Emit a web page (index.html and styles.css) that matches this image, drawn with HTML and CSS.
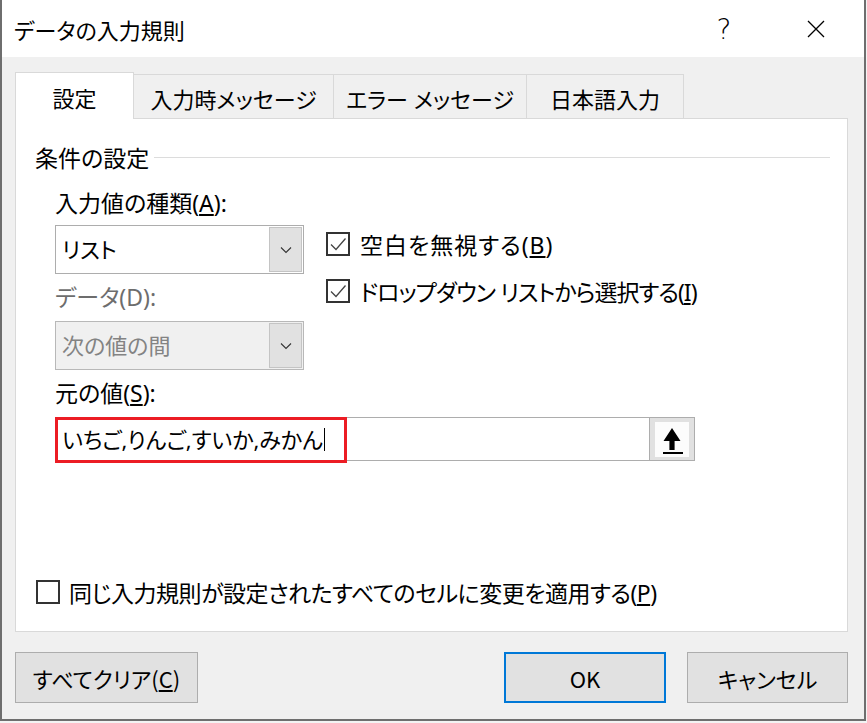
FILE: index.html
```html
<!DOCTYPE html>
<html lang="ja">
<head>
    <meta charset="UTF-8">
    <title>データの入力規則</title>
    <link rel="stylesheet" href="styles.css">
</head>
<body>
    <div class="dialog">
        <div class="titlebar">
            <span class="title">データの入力規則</span>
            <span class="title-btn help">?</span>
            <span class="title-btn close">
                <svg width="18" height="18" viewBox="0 0 18 18"><path d="M1 1 L17 17 M17 1 L1 17" stroke="#000" stroke-width="1.3" fill="none"/></svg>
            </span>
        </div>

        <div class="tabs">
            <div class="tab active">設定</div>
            <div class="tab tab-2">入力時メッセージ</div>
            <div class="tab tab-3">エラー メッセージ</div>
            <div class="tab tab-4">日本語入力</div>
        </div>

        <div class="panel">
            <div class="group-head">
                <span>条件の設定</span>
                <span class="rule"></span>
            </div>

            <div class="criteria">
                <div class="col-left">
                    <div class="label">入力値の種類(<u>A</u>):</div>
                    <div class="combo">
                        <span class="combo-text">リスト</span>
                        <span class="combo-btn">
                            <svg width="12" height="8" viewBox="0 0 12 8"><path d="M1 1.5 L6 6.5 L11 1.5" stroke="#333" stroke-width="1.1" fill="none"/></svg>
                        </span>
                    </div>
                    <div class="label label-2 disabled">データ(D):</div>
                    <div class="combo combo-2 disabled">
                        <span class="combo-text">次の値の間</span>
                        <span class="combo-btn">
                            <svg width="12" height="8" viewBox="0 0 12 8"><path d="M1 1.5 L6 6.5 L11 1.5" stroke="#333" stroke-width="1.1" fill="none"/></svg>
                        </span>
                    </div>
                </div>
                <div class="col-right">
                    <div class="check">
                        <span class="box">
                            <svg width="20" height="20" viewBox="0 0 20 20"><path d="M3 10.5 L8 15.5 L17.5 4.5" stroke="#444" stroke-width="1.3" fill="none"/></svg>
                        </span>
                        <span class="loose">空白を無視する(<u>B</u>)</span>
                    </div>
                    <div class="check check-2">
                        <span class="box">
                            <svg width="20" height="20" viewBox="0 0 20 20"><path d="M3 10.5 L8 15.5 L17.5 4.5" stroke="#444" stroke-width="1.3" fill="none"/></svg>
                        </span>
                        <span class="tight">ドロップダウン リストから選択する(<u>I</u>)</span>
                    </div>
                </div>
            </div>

            <div class="label label-3">元の値(<u>S</u>):</div>
            <div class="source">
                <span class="source-text">いちご,りんご,すいか,みかん<span class="caret"></span></span>
                <span class="ref-btn">
                    <span class="ref-inner">
                        <svg width="34" height="35" viewBox="0 0 34 35"><path d="M17 6 L25.5 19 L19.6 19 L19.6 28 L14.4 28 L14.4 19 L8.5 19 Z" fill="#000"/><rect x="8" y="30" width="20" height="2" fill="#000"/></svg>
                    </span>
                </span>
                <span class="highlight"></span>
            </div>

            <div class="check apply">
                <span class="box"></span>
                <span class="semi-tight">同じ入力規則が設定されたすべてのセルに変更を適用する(<u>P</u>)</span>
            </div>
        </div>

        <div class="buttons">
            <button class="btn btn-clear">すべてクリア(<u>C</u>)</button>
            <div class="btn-group">
                <button class="btn btn-ok">OK</button>
                <button class="btn btn-cancel">キャンセル</button>
            </div>
        </div>
    </div>
</body>
</html>
```

FILE: styles.css
```css
body {
    margin: 0;
    background-color: #f3f3f3;
    font-family: "Noto Sans", "Noto Sans CJK JP", sans-serif;
    font-feature-settings: "palt";
    font-size: 23px;
    color: #000;
}

.dialog {
    width: 862px;
    height: 719px;
    background-color: #f0f0f0;
    border: 2px solid #6e6e6e;
    border-top: none;
}

.titlebar {
    height: 57px;
    background-color: #fff;
    display: flex;
    align-items: center;
}

.title {
    font-size: 22px;
    padding-left: 12px;
    flex: 1;
}

.title-btn {
    width: 92px;
    height: 57px;
    display: flex;
    align-items: center;
    justify-content: center;
}

.help {
    font-family: "DejaVu Sans", sans-serif;
    font-size: 28px;
    font-weight: 200;
    padding-top: 1px;
}

.close {
    margin-right: 2px;
}

.tabs {
    display: flex;
    align-items: flex-end;
    height: 46px;
    margin-top: 15px;
    padding-left: 13px;
    font-size: 22px;
}

.tab {
    height: 44px;
    box-sizing: border-box;
    border: 1px solid #d9d9d9;
    border-bottom: none;
    margin-left: -1px;
    display: flex;
    align-items: center;
    justify-content: center;
    padding-top: 2px;
}

.tab.active {
    width: 119px;
    height: 47px;
    margin-left: 0;
    margin-bottom: -1px;
    background-color: #fff;
    position: relative;
    z-index: 1;
}

.tab-2 { width: 201px; }
.tab-3 { width: 194px; }
.tab-4 { width: 158px; }

.panel {
    margin-left: 13px;
    width: 833px;
    height: 514px;
    box-sizing: border-box;
    background-color: #fff;
    border: 1px solid #d9d9d9;
    padding: 25px 17px 0 19px;
}

.group-head {
    display: flex;
    align-items: center;
    height: 26px;
}

.rule {
    flex: 1;
    height: 1px;
    background-color: #dcdcdc;
    margin-left: 5px;
}

.criteria {
    display: flex;
    margin: 18px 0 0 20px;
}

.col-left {
    width: 249px;
}

.col-right {
    margin-left: 22px;
    padding-top: 44px;
}

.label {
    height: 30px;
    line-height: 30px;
}

.label.disabled {
    color: #6d6d6d;
}

.label-2 { margin-top: 8px; }

.label-3 {
    margin: 8px 0 0 20px;
}

.combo {
    margin-top: 7px;
    height: 49px;
    box-sizing: border-box;
    border: 1px solid #adadad;
    background-color: #fff;
    display: flex;
}

.combo-2 {
    margin-top: 9px;
}

.combo.disabled {
    background-color: #f0f0f0;
    border-color: #b8b8b8;
    color: #838383;
}

.combo-text {
    flex: 1;
    padding-left: 6px;
    line-height: 47px;
    font-size: 22px;
}

.combo-btn {
    width: 33px;
    margin: 1px;
    box-sizing: border-box;
    border: 1px solid #c4c4c4;
    background-color: #e1e1e1;
    display: flex;
    align-items: center;
    justify-content: center;
}

.check {
    display: flex;
    align-items: center;
    height: 24px;
}

.check-2 {
    margin-top: 23px;
}

.loose {
    letter-spacing: 1px;
}

.tight {
    letter-spacing: -1px;
}

.semi-tight {
    letter-spacing: -0.5px;
}

.box {
    width: 24px;
    height: 24px;
    box-sizing: border-box;
    border: 2px solid #333;
    background-color: #fff;
    margin-right: 10px;
    flex-shrink: 0;
}

.box svg {
    display: block;
}

.source {
    position: relative;
    margin: 9px 0 0 20px;
    width: 640px;
    height: 44px;
    box-sizing: border-box;
    border: 1px solid #adadad;
    background-color: #fff;
    display: flex;
}

.source-text {
    flex: 1;
    padding-left: 6px;
    line-height: 42px;
    font-size: 22px;
    display: flex;
    align-items: center;
}

.caret {
    width: 1px;
    height: 23px;
    background-color: #000;
    margin-left: 1px;
}

.ref-btn {
    width: 45px;
    box-sizing: border-box;
    border-left: 1px solid #adadad;
    background-color: #e1e1e1;
    display: flex;
    align-items: center;
    justify-content: center;
}

.ref-inner {
    width: 34px;
    height: 35px;
    background-color: #fcfcfc;
}

.ref-inner svg {
    display: block;
}

.highlight {
    position: absolute;
    left: -1px;
    top: -1px;
    width: 292px;
    height: 46px;
    box-sizing: border-box;
    border: 3px solid #ec1c24;
}

.apply {
    margin: 119px 0 0 1px;
}

.apply .box {
    margin-right: 9px;
}

.buttons {
    display: flex;
    justify-content: space-between;
    margin-top: 20px;
    padding: 0 16px 0 13px;
}

.btn-group {
    display: flex;
    gap: 21px;
}

.btn {
    height: 51px;
    font-family: "Noto Sans CJK JP", sans-serif;
    font-size: 22px;
    font-feature-settings: "palt";
    color: #000;
    background-color: #e1e1e1;
    border: 1px solid #adadad;
    padding: 0;
}

.btn-clear { width: 183px; }
.btn-ok {
    width: 162px;
    border: 2px solid #0078d7;
}
.btn-cancel { width: 161px; }
```
